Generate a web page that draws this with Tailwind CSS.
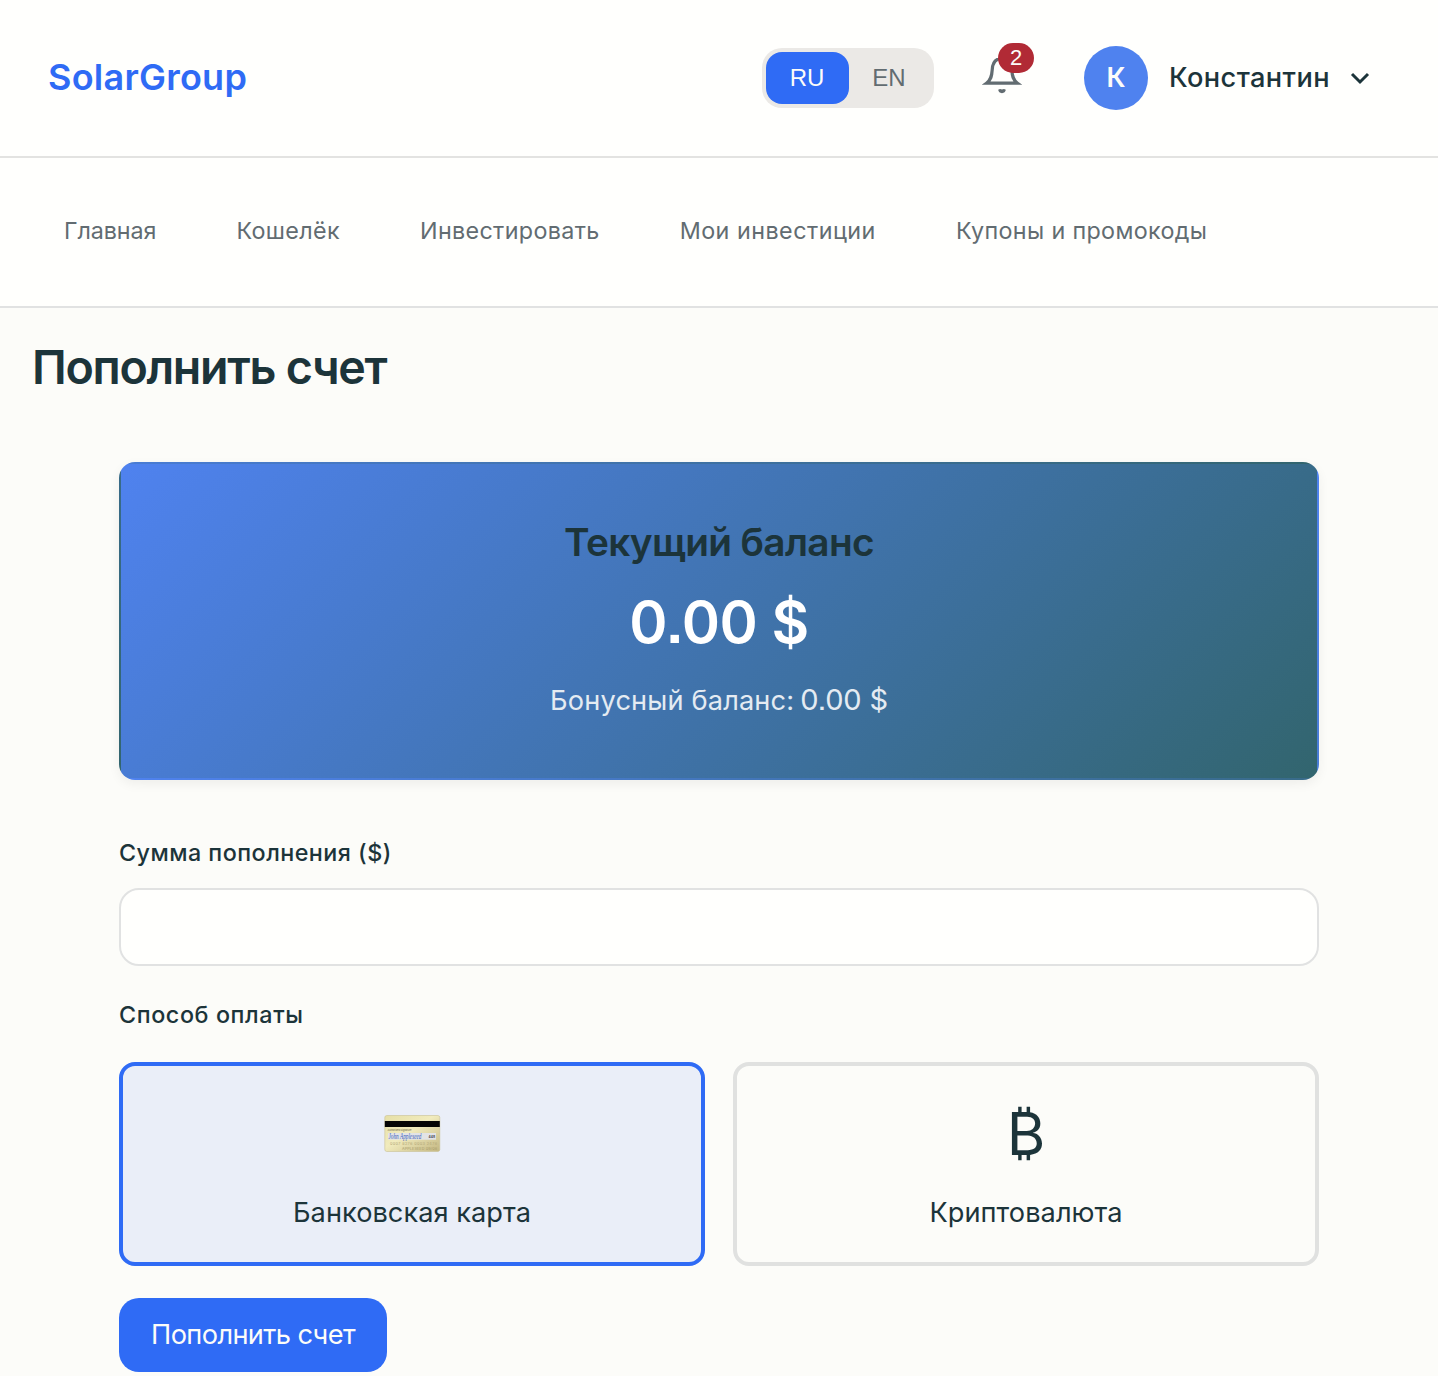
<!DOCTYPE html>
<html lang="ru">
<head>
<meta charset="utf-8">
<title>SolarGroup</title>
<script src="https://cdn.jsdelivr.net/npm/@tailwindcss/browser@4"></script>
</head>
<body class="h-[1376px] overflow-hidden bg-[#fcfcf9] font-['Inter',sans-serif] text-[#1c343a]">
<header class="flex h-[158px] items-center justify-between border-b-2 border-[#e3e3e1] bg-[#fffffd] pr-[66px] pl-12">
  <a class="pb-[3px] text-[36px] leading-[44px] font-semibold tracking-[0.25px] text-[#2f6bf5]">SolarGroup</a>
  <div class="flex items-center">
    <div class="flex h-[60px] w-[172px] rounded-[20px] bg-[#ebe9e6] p-1 font-['Liberation_Sans',sans-serif] text-[24px]">
      <span class="flex w-[83px] items-center justify-center rounded-2xl bg-[#2f6bf5] pr-px text-[#fcfcf9]">RU</span>
      <span class="flex w-[81px] items-center justify-center pr-px text-[#626c71]">EN</span>
    </div>
    <div class="relative ml-12 h-10 w-10">
      <svg class="h-10 w-10" viewBox="0 0 40 40" fill="none" stroke="#626c71" stroke-width="3.2"><path d="M4.500 25.200C9 21.800 9.800 18 10.200 12C10.500 5 13.500 0.500 20 0.500S29.500 5 29.800 12C30.200 18 31 21.800 35.500 25.200Z" stroke-miterlimit="8"/><path d="M16.500 31.500c1-.8 2.500-.6 3.500 0c1-.6 2.500-.8 3.500 0c.8 1.500-1.500 3.700-3.500 3.700s-4.300-2.200-3.500-3.700Z" fill="#626c71" stroke="none"/></svg>
      <span class="absolute -top-[15px] left-4 flex h-[30px] w-9 items-center justify-center rounded-[15px] bg-[#b12a35] pb-[2px] font-['Liberation_Sans',sans-serif] text-[22px] text-[#fcfcf9]">2</span>
    </div>
    <div class="ml-[62px] flex items-center">
      <div class="flex h-16 w-16 items-center justify-center rounded-full bg-[#4f82ef] text-[27px] font-semibold text-[#fcfcf9]">К</div>
      <span class="ml-[21px] w-[162px] text-[27.2px] font-medium tracking-[0.4px] whitespace-nowrap">Константин</span>
      <svg class="ml-[17px] h-6 w-6" viewBox="0 0 24 24" fill="none" stroke="#1c343a" stroke-width="3"><path d="M4 8l8 8 8-8"/></svg>
    </div>
  </div>
</header>
<nav class="flex h-[150px] items-center gap-20 border-b-2 border-[#e1e2e2] bg-[#fffffd] px-16 pb-[2px] text-[23.3px] whitespace-nowrap text-[#626c71]">
  <a class="tracking-[-0.07px]">Главная</a>
  <a class="tracking-[0.36px]">Кошелёк</a>
  <a class="tracking-[0.35px]">Инвестировать</a>
  <a class="tracking-[0.49px]">Мои инвестиции</a>
  <a class="tracking-[0.36px]">Купоны и промокоды</a>
</nav>
<main>
  <h1 class="px-8 pt-[30px] text-[46.6px] leading-[58px] font-semibold tracking-[-1.3px]">Пополнить счет</h1>
  <div class="mx-auto mt-[66px] w-[1200px]">
    <section class="flex h-[318px] flex-col items-center rounded-2xl border-2 border-transparent bg-[linear-gradient(135deg,#4f82ef,#32656e)] pt-[54px] text-center shadow-[0_4px_12px_rgba(0,0,0,0.06)]">
      <h2 class="text-[38.8px] leading-[48px] font-semibold tracking-[-0.65px]">Текущий баланс</h2>
      <div class="mt-5 text-[58px] leading-[72px] font-semibold tracking-[-0.5px] text-white [font-feature-settings:'ss07']">0.00 $</div>
      <div class="mt-[21px] flex items-baseline gap-[6px] text-[27.2px] leading-[42px] text-[#e4ebf2]"><span class="tracking-[0.15px]">Бонусный баланс:</span><span class="text-[29px] tracking-[-0.15px] [font-feature-settings:'ss07']">0.00 $</span></div>
    </section>
    <label class="mt-[55px] block text-[23.3px] leading-[36px] font-medium tracking-[0.47px]">Сумма пополнения ($)</label>
    <input class="mt-[17px] block h-[78px] w-full rounded-[20px] border-2 border-[#e1e2e2] bg-[#fffffd]">
    <div class="mt-[31px] text-[23.3px] leading-[36px] font-medium tracking-[0.6px]">Способ оплаты</div>
    <div class="mt-[29px] grid grid-cols-2 gap-7">
      <div class="flex h-[204px] flex-col items-center rounded-2xl border-4 border-[#2f6bf5] bg-[#eaeef8] pt-[45px]">
        <svg class="h-[44px] w-[58px]" viewBox="0 0 58 44">
          <defs><linearGradient id="gold" x1="0" y1="0" x2="1" y2="1"><stop offset="0" stop-color="#e6dfa6"/><stop offset=".45" stop-color="#f1ebbd"/><stop offset="1" stop-color="#c4b782"/></linearGradient></defs>
          <rect x="1.800" y="4.500" width="55" height="36" rx="2" fill="url(#gold)" stroke="#c9c196" stroke-width=".6"/>
          <rect x="1.800" y="10" width="55" height="6" fill="#050505"/>
          <text x="4.500" y="20.200" font-size="2.600" fill="#6f6a4a" textLength="24">Authorized Signature</text>
          <rect x="5" y="22" width="48" height="6.700" fill="#e2e3e6"/>
          <text x="5.500" y="28" font-family="Liberation Serif, serif" font-style="italic" font-size="7.500" fill="#3a62bb" textLength="33" lengthAdjust="spacingAndGlyphs">John Appleseed</text>
          <text x="45.500" y="26.600" font-size="3.200" font-weight="700" fill="#33343c" textLength="6.500">448</text>
          <text x="7" y="34" font-size="3.800" fill="#b3a878" textLength="47">0007 8276 0003 2476</text>
          <text x="19" y="39" font-size="3.800" fill="#a99d6c" textLength="35">APPLESEED 09/06</text>
        </svg>
        <div class="mt-[36px] text-[27.2px] leading-[43px] tracking-[0.03px]">Банковская карта</div>
      </div>
      <div class="flex h-[204px] flex-col items-center rounded-2xl border-4 border-[#e0e1e0] pt-[26px]">
        <div class="text-[59px] leading-[84px]">₿</div>
        <div class="mt-[15px] text-[27.2px] leading-[43px] tracking-[0.04px]">Криптовалюта</div>
      </div>
    </div>
    <button class="mt-8 flex h-[74px] w-[268px] items-center justify-center rounded-[20px] bg-[#2f6bf5] text-[27.2px] tracking-[-0.62px] text-[#fcfcf9]">Пополнить счет</button>
  </div>
</main>
</body>
</html>
